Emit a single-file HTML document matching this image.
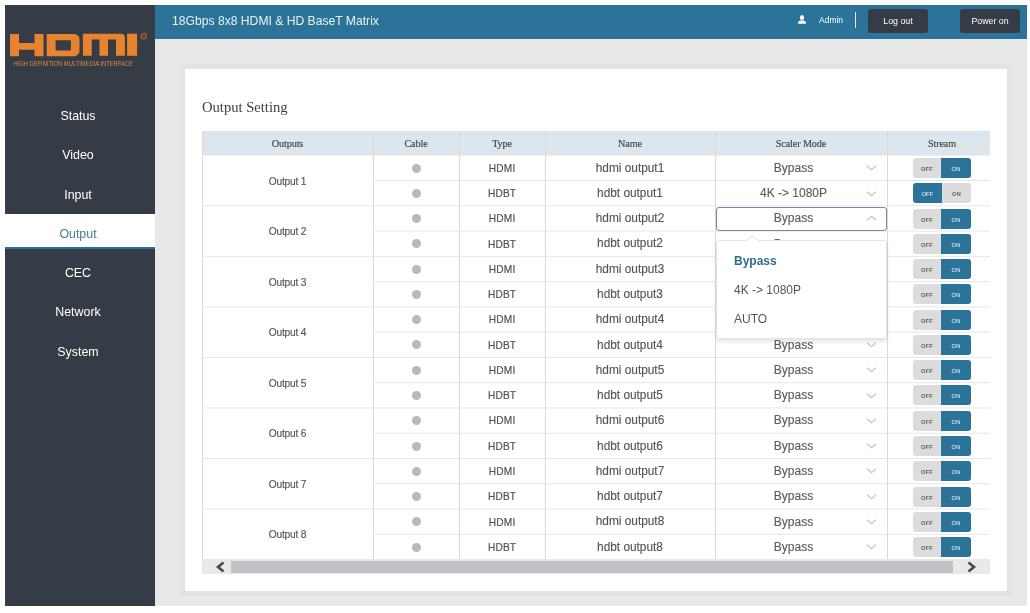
<!DOCTYPE html>
<html><head><meta charset="utf-8">
<style>
*{box-sizing:border-box;margin:0;padding:0}
html,body{width:1030px;height:613px;background:#fff;overflow:hidden;font-family:"Liberation Sans",sans-serif}
#wrap{position:absolute;left:0;top:0;width:1030px;height:613px;will-change:transform}
.a{position:absolute}
#side{left:5px;top:5px;width:150px;height:601px;background:#363c45}
#top{left:155px;top:5px;width:872px;height:34px;background:#2b7398}
#main{left:155px;top:39px;width:872px;height:567px;background:#e8e8e8}
#card{left:180px;top:64px;width:832px;height:532px;border:5px solid #e2e2e2;border-radius:4px;background:#fff}
.nav{left:3px;width:150px;text-align:center;color:#fff;font-size:12.4px;height:20px;line-height:20px}
.t{white-space:nowrap;text-align:center}
.hd{font-family:"Liberation Serif",serif;font-size:10.2px;letter-spacing:-0.12px;color:#444;height:24px;line-height:24px;-webkit-text-stroke:0.2px #555}
.c{color:#535353;height:25px;line-height:25px;-webkit-text-stroke:0.12px #535353}
.dot{width:9px;height:9px;border-radius:50%;background:#b9b9b9}
.tg{width:58px;height:20px;border-radius:3px;overflow:hidden;font-size:5.6px;font-weight:bold;letter-spacing:0.3px}
.tg div{position:absolute;top:0;height:20px;line-height:22px;text-align:center}
.off{background:#dcdcdc;color:#5e5e5e}
.on{background:#2b7398;color:#fff;font-weight:normal}
</style></head><body><div id="wrap">
<div id="side" class="a"></div>
<div id="top" class="a"></div>
<div id="main" class="a"></div>
<div id="card" class="a"></div>
<svg class="a" style="left:0;top:0" width="155" height="75" viewBox="0 0 155 75">
<g fill="#e8832f">
<path d="M10 34h9v8.9h15.5V34h9v22.2h-9v-6.5H19v6.5h-9z"/>
<path d="M46.7 34h27.3a5.5 5.5 0 0 1 5.5 5.5v11.2a5.5 5.5 0 0 1-5.5 5.5H46.7V40.2h8.9v10.2h15.3V40.2H46.7z"/>
<path d="M82.9 33.7h38a4 4 0 0 1 4 4v18.1h-8.9V39.6h-8v16.2h-8.5V39.6h-7.8v16.2h-8.8z"/>
<rect x="127.1" y="33.7" width="10" height="22.1"/>
</g>
<circle cx="143.7" cy="36.3" r="2.6" fill="none" stroke="#a9642b" stroke-width="1.2"/><circle cx="143.7" cy="36.3" r="0.9" fill="#8a5a33"/>
<text x="13.4" y="66" font-family="Liberation Sans" font-size="6.6" fill="#dd8a40" textLength="119.5" lengthAdjust="spacingAndGlyphs">HIGH DEFINITION MULTIMEDIA INTERFACE</text>
</svg>
<div class="a nav" style="top:106.0px">Status</div>
<div class="a nav" style="top:145.3px">Video</div>
<div class="a nav" style="top:184.6px">Input</div>
<div class="a" style="left:5px;top:214px;width:150px;height:35px;background:#fff;border-bottom:2px solid #2b7398"></div>
<div class="a nav" style="top:223.8px;color:#4a7a95">Output</div>
<div class="a nav" style="top:263.1px">CEC</div>
<div class="a nav" style="top:302.3px">Network</div>
<div class="a nav" style="top:341.6px">System</div>
<div class="a t" style="left:172px;top:10.7px;font-size:12.15px;line-height:20px;color:#e9f0f4">18Gbps 8x8 HDMI &amp; HD BaseT Matrix</div>
<svg class="a" style="left:797px;top:14px" width="10" height="11" viewBox="0 0 10 11"><ellipse cx="5" cy="3.6" rx="2.1" ry="2.5" fill="#fff"/><path d="M1 9.8 C1 6.8 2.6 6.4 5 6.4 S9 6.8 9 9.8Z" fill="#fff"/></svg>
<div class="a t" style="left:819px;top:12px;font-size:8.5px;line-height:16px;color:#fff">Admin</div>
<div class="a" style="left:855px;top:12px;width:1px;height:16px;background:#dfe9ef"></div>
<div class="a t" style="left:868px;top:9px;width:60px;height:24px;line-height:24px;border-radius:3px;background:#363c45;color:#fff;font-size:8.8px">Log out</div>
<div class="a t" style="left:960px;top:9px;width:60px;height:24px;line-height:24px;border-radius:3px;background:#363c45;color:#fff;font-size:8.8px">Power on</div>
<div class="a" style="left:202px;top:97px;font-family:'Liberation Serif',serif;font-size:14.6px;line-height:20px;color:#3a3f48">Output Setting</div>
<div class="a" style="left:202px;top:131px;width:788px;height:24px;background:#dce6ec"></div>
<div class="a t hd" style="left:202px;top:131.9px;width:171px">Outputs</div>
<div class="a t hd" style="left:373px;top:131.9px;width:86px">Cable</div>
<div class="a t hd" style="left:459px;top:131.9px;width:86px">Type</div>
<div class="a t hd" style="left:545px;top:131.9px;width:170px">Name</div>
<div class="a t hd" style="left:715px;top:131.9px;width:172px">Scaler Mode</div>
<div class="a t hd" style="left:887px;top:131.9px;width:110px">Stream</div>
<svg class="a" style="left:0;top:0" width="1030" height="613" viewBox="0 0 1030 613"><rect x="202" y="131" width="1" height="428.07" fill="#d9d9d9"/><rect x="373" y="131" width="1" height="428.07" fill="#d9d9d9"/><rect x="459" y="131" width="1" height="428.07" fill="#d9d9d9"/><rect x="545" y="131" width="1" height="428.07" fill="#d9d9d9"/><rect x="715" y="131" width="1" height="428.07" fill="#d9d9d9"/><rect x="887" y="131" width="1" height="428.07" fill="#d9d9d9"/><rect x="202" y="155.00" width="788" height="1" fill="#e8eef2"/><rect x="373" y="180.02" width="617" height="1" fill="#e6e6e6"/><rect x="202" y="205.29" width="788" height="1" fill="#e6e6e6"/><rect x="373" y="230.56" width="617" height="1" fill="#e6e6e6"/><rect x="202" y="255.83" width="788" height="1" fill="#e6e6e6"/><rect x="373" y="281.10" width="617" height="1" fill="#e6e6e6"/><rect x="202" y="306.37" width="788" height="1" fill="#e6e6e6"/><rect x="373" y="331.64" width="617" height="1" fill="#e6e6e6"/><rect x="202" y="356.91" width="788" height="1" fill="#e6e6e6"/><rect x="373" y="382.18" width="617" height="1" fill="#e6e6e6"/><rect x="202" y="407.45" width="788" height="1" fill="#e6e6e6"/><rect x="373" y="432.72" width="617" height="1" fill="#e6e6e6"/><rect x="202" y="457.99" width="788" height="1" fill="#e6e6e6"/><rect x="373" y="483.26" width="617" height="1" fill="#e6e6e6"/><rect x="202" y="508.53" width="788" height="1" fill="#e6e6e6"/><rect x="373" y="533.80" width="617" height="1" fill="#e6e6e6"/></svg>
<div class="a t c" style="left:202px;top:168.5px;width:171px;font-size:10.2px;letter-spacing:-0.2px">Output 1</div>
<div class="a dot" style="left:412px;top:163.5px"></div>
<div class="a t c" style="left:459px;top:155.7px;width:86px;font-size:10.1px;letter-spacing:0.2px;text-indent:0.2px;-webkit-text-stroke:0.2px #555">HDMI</div>
<div class="a t c" style="left:545px;top:155.6px;width:170px;font-size:11.85px">hdmi output1</div>
<div class="a t c" style="left:716px;top:155.7px;width:155px;font-size:12px;color:#5c5c5c">Bypass</div>
<svg class="a" style="left:866px;top:165.2px" width="11" height="6" viewBox="0 0 11 6"><path d="M1 0.8L5.5 4.7L10 0.8" fill="none" stroke="#c6c6c6" stroke-width="1.3"/></svg>
<div class="a tg" style="left:913px;top:158.0px"><div class="off" style="left:0;width:28px">OFF</div><div class="on" style="left:28px;width:30px">ON</div></div>
<div class="a dot" style="left:412px;top:188.8px"></div>
<div class="a t c" style="left:459px;top:181.0px;width:86px;font-size:10.1px;letter-spacing:0.2px;text-indent:0.2px;-webkit-text-stroke:0.2px #555">HDBT</div>
<div class="a t c" style="left:545px;top:180.9px;width:170px;font-size:11.85px">hdbt output1</div>
<div class="a t c" style="left:716px;top:181.0px;width:155px;font-size:12px;color:#5c5c5c">4K -&gt; 1080P</div>
<svg class="a" style="left:866px;top:190.5px" width="11" height="6" viewBox="0 0 11 6"><path d="M1 0.8L5.5 4.7L10 0.8" fill="none" stroke="#c6c6c6" stroke-width="1.3"/></svg>
<div class="a tg" style="left:913px;top:183.3px"><div class="on" style="left:0;width:29px">OFF</div><div class="off" style="left:29px;width:29px">ON</div></div>
<div class="a t c" style="left:202px;top:219.1px;width:171px;font-size:10.2px;letter-spacing:-0.2px">Output 2</div>
<div class="a dot" style="left:412px;top:214.0px"></div>
<div class="a t c" style="left:459px;top:206.2px;width:86px;font-size:10.1px;letter-spacing:0.2px;text-indent:0.2px;-webkit-text-stroke:0.2px #555">HDMI</div>
<div class="a t c" style="left:545px;top:206.1px;width:170px;font-size:11.85px">hdmi output2</div>
<div class="a t c" style="left:716px;top:206.2px;width:155px;font-size:12px;color:#5c5c5c">Bypass</div>
<div class="a" style="left:716px;top:207px;width:171px;height:24px;border:1.3px solid #6b8cab;border-radius:3px"></div>
<svg class="a" style="left:866px;top:215.0px" width="11" height="6" viewBox="0 0 11 6"><path d="M1 5.2L5.5 1.3L10 5.2" fill="none" stroke="#c6c6c6" stroke-width="1.3"/></svg>
<div class="a tg" style="left:913px;top:208.5px"><div class="off" style="left:0;width:28px">OFF</div><div class="on" style="left:28px;width:30px">ON</div></div>
<div class="a dot" style="left:412px;top:239.3px"></div>
<div class="a t c" style="left:459px;top:231.5px;width:86px;font-size:10.1px;letter-spacing:0.2px;text-indent:0.2px;-webkit-text-stroke:0.2px #555">HDBT</div>
<div class="a t c" style="left:545px;top:231.4px;width:170px;font-size:11.85px">hdbt output2</div>
<div class="a t c" style="left:716px;top:231.5px;width:155px;font-size:12px;color:#5c5c5c">Bypass</div>
<svg class="a" style="left:866px;top:241.0px" width="11" height="6" viewBox="0 0 11 6"><path d="M1 0.8L5.5 4.7L10 0.8" fill="none" stroke="#c6c6c6" stroke-width="1.3"/></svg>
<div class="a tg" style="left:913px;top:233.8px"><div class="off" style="left:0;width:28px">OFF</div><div class="on" style="left:28px;width:30px">ON</div></div>
<div class="a t c" style="left:202px;top:269.6px;width:171px;font-size:10.2px;letter-spacing:-0.2px">Output 3</div>
<div class="a dot" style="left:412px;top:264.6px"></div>
<div class="a t c" style="left:459px;top:256.8px;width:86px;font-size:10.1px;letter-spacing:0.2px;text-indent:0.2px;-webkit-text-stroke:0.2px #555">HDMI</div>
<div class="a t c" style="left:545px;top:256.7px;width:170px;font-size:11.85px">hdmi output3</div>
<div class="a t c" style="left:716px;top:256.8px;width:155px;font-size:12px;color:#5c5c5c">Bypass</div>
<svg class="a" style="left:866px;top:266.3px" width="11" height="6" viewBox="0 0 11 6"><path d="M1 0.8L5.5 4.7L10 0.8" fill="none" stroke="#c6c6c6" stroke-width="1.3"/></svg>
<div class="a tg" style="left:913px;top:259.1px"><div class="off" style="left:0;width:28px">OFF</div><div class="on" style="left:28px;width:30px">ON</div></div>
<div class="a dot" style="left:412px;top:289.8px"></div>
<div class="a t c" style="left:459px;top:282.0px;width:86px;font-size:10.1px;letter-spacing:0.2px;text-indent:0.2px;-webkit-text-stroke:0.2px #555">HDBT</div>
<div class="a t c" style="left:545px;top:281.9px;width:170px;font-size:11.85px">hdbt output3</div>
<div class="a t c" style="left:716px;top:282.0px;width:155px;font-size:12px;color:#5c5c5c">Bypass</div>
<svg class="a" style="left:866px;top:291.5px" width="11" height="6" viewBox="0 0 11 6"><path d="M1 0.8L5.5 4.7L10 0.8" fill="none" stroke="#c6c6c6" stroke-width="1.3"/></svg>
<div class="a tg" style="left:913px;top:284.3px"><div class="off" style="left:0;width:28px">OFF</div><div class="on" style="left:28px;width:30px">ON</div></div>
<div class="a t c" style="left:202px;top:320.1px;width:171px;font-size:10.2px;letter-spacing:-0.2px">Output 4</div>
<div class="a dot" style="left:412px;top:315.1px"></div>
<div class="a t c" style="left:459px;top:307.3px;width:86px;font-size:10.1px;letter-spacing:0.2px;text-indent:0.2px;-webkit-text-stroke:0.2px #555">HDMI</div>
<div class="a t c" style="left:545px;top:307.2px;width:170px;font-size:11.85px">hdmi output4</div>
<div class="a t c" style="left:716px;top:307.3px;width:155px;font-size:12px;color:#5c5c5c">Bypass</div>
<svg class="a" style="left:866px;top:316.8px" width="11" height="6" viewBox="0 0 11 6"><path d="M1 0.8L5.5 4.7L10 0.8" fill="none" stroke="#c6c6c6" stroke-width="1.3"/></svg>
<div class="a tg" style="left:913px;top:309.6px"><div class="off" style="left:0;width:28px">OFF</div><div class="on" style="left:28px;width:30px">ON</div></div>
<div class="a dot" style="left:412px;top:340.4px"></div>
<div class="a t c" style="left:459px;top:332.6px;width:86px;font-size:10.1px;letter-spacing:0.2px;text-indent:0.2px;-webkit-text-stroke:0.2px #555">HDBT</div>
<div class="a t c" style="left:545px;top:332.5px;width:170px;font-size:11.85px">hdbt output4</div>
<div class="a t c" style="left:716px;top:332.6px;width:155px;font-size:12px;color:#5c5c5c">Bypass</div>
<svg class="a" style="left:866px;top:342.1px" width="11" height="6" viewBox="0 0 11 6"><path d="M1 0.8L5.5 4.7L10 0.8" fill="none" stroke="#c6c6c6" stroke-width="1.3"/></svg>
<div class="a tg" style="left:913px;top:334.9px"><div class="off" style="left:0;width:28px">OFF</div><div class="on" style="left:28px;width:30px">ON</div></div>
<div class="a t c" style="left:202px;top:370.7px;width:171px;font-size:10.2px;letter-spacing:-0.2px">Output 5</div>
<div class="a dot" style="left:412px;top:365.6px"></div>
<div class="a t c" style="left:459px;top:357.8px;width:86px;font-size:10.1px;letter-spacing:0.2px;text-indent:0.2px;-webkit-text-stroke:0.2px #555">HDMI</div>
<div class="a t c" style="left:545px;top:357.7px;width:170px;font-size:11.85px">hdmi output5</div>
<div class="a t c" style="left:716px;top:357.8px;width:155px;font-size:12px;color:#5c5c5c">Bypass</div>
<svg class="a" style="left:866px;top:367.3px" width="11" height="6" viewBox="0 0 11 6"><path d="M1 0.8L5.5 4.7L10 0.8" fill="none" stroke="#c6c6c6" stroke-width="1.3"/></svg>
<div class="a tg" style="left:913px;top:360.1px"><div class="off" style="left:0;width:28px">OFF</div><div class="on" style="left:28px;width:30px">ON</div></div>
<div class="a dot" style="left:412px;top:390.9px"></div>
<div class="a t c" style="left:459px;top:383.1px;width:86px;font-size:10.1px;letter-spacing:0.2px;text-indent:0.2px;-webkit-text-stroke:0.2px #555">HDBT</div>
<div class="a t c" style="left:545px;top:383.0px;width:170px;font-size:11.85px">hdbt output5</div>
<div class="a t c" style="left:716px;top:383.1px;width:155px;font-size:12px;color:#5c5c5c">Bypass</div>
<svg class="a" style="left:866px;top:392.6px" width="11" height="6" viewBox="0 0 11 6"><path d="M1 0.8L5.5 4.7L10 0.8" fill="none" stroke="#c6c6c6" stroke-width="1.3"/></svg>
<div class="a tg" style="left:913px;top:385.4px"><div class="off" style="left:0;width:28px">OFF</div><div class="on" style="left:28px;width:30px">ON</div></div>
<div class="a t c" style="left:202px;top:421.2px;width:171px;font-size:10.2px;letter-spacing:-0.2px">Output 6</div>
<div class="a dot" style="left:412px;top:416.2px"></div>
<div class="a t c" style="left:459px;top:408.4px;width:86px;font-size:10.1px;letter-spacing:0.2px;text-indent:0.2px;-webkit-text-stroke:0.2px #555">HDMI</div>
<div class="a t c" style="left:545px;top:408.3px;width:170px;font-size:11.85px">hdmi output6</div>
<div class="a t c" style="left:716px;top:408.4px;width:155px;font-size:12px;color:#5c5c5c">Bypass</div>
<svg class="a" style="left:866px;top:417.9px" width="11" height="6" viewBox="0 0 11 6"><path d="M1 0.8L5.5 4.7L10 0.8" fill="none" stroke="#c6c6c6" stroke-width="1.3"/></svg>
<div class="a tg" style="left:913px;top:410.7px"><div class="off" style="left:0;width:28px">OFF</div><div class="on" style="left:28px;width:30px">ON</div></div>
<div class="a dot" style="left:412px;top:441.5px"></div>
<div class="a t c" style="left:459px;top:433.7px;width:86px;font-size:10.1px;letter-spacing:0.2px;text-indent:0.2px;-webkit-text-stroke:0.2px #555">HDBT</div>
<div class="a t c" style="left:545px;top:433.6px;width:170px;font-size:11.85px">hdbt output6</div>
<div class="a t c" style="left:716px;top:433.7px;width:155px;font-size:12px;color:#5c5c5c">Bypass</div>
<svg class="a" style="left:866px;top:443.2px" width="11" height="6" viewBox="0 0 11 6"><path d="M1 0.8L5.5 4.7L10 0.8" fill="none" stroke="#c6c6c6" stroke-width="1.3"/></svg>
<div class="a tg" style="left:913px;top:436.0px"><div class="off" style="left:0;width:28px">OFF</div><div class="on" style="left:28px;width:30px">ON</div></div>
<div class="a t c" style="left:202px;top:471.8px;width:171px;font-size:10.2px;letter-spacing:-0.2px">Output 7</div>
<div class="a dot" style="left:412px;top:466.7px"></div>
<div class="a t c" style="left:459px;top:458.9px;width:86px;font-size:10.1px;letter-spacing:0.2px;text-indent:0.2px;-webkit-text-stroke:0.2px #555">HDMI</div>
<div class="a t c" style="left:545px;top:458.8px;width:170px;font-size:11.85px">hdmi output7</div>
<div class="a t c" style="left:716px;top:458.9px;width:155px;font-size:12px;color:#5c5c5c">Bypass</div>
<svg class="a" style="left:866px;top:468.4px" width="11" height="6" viewBox="0 0 11 6"><path d="M1 0.8L5.5 4.7L10 0.8" fill="none" stroke="#c6c6c6" stroke-width="1.3"/></svg>
<div class="a tg" style="left:913px;top:461.2px"><div class="off" style="left:0;width:28px">OFF</div><div class="on" style="left:28px;width:30px">ON</div></div>
<div class="a dot" style="left:412px;top:492.0px"></div>
<div class="a t c" style="left:459px;top:484.2px;width:86px;font-size:10.1px;letter-spacing:0.2px;text-indent:0.2px;-webkit-text-stroke:0.2px #555">HDBT</div>
<div class="a t c" style="left:545px;top:484.1px;width:170px;font-size:11.85px">hdbt output7</div>
<div class="a t c" style="left:716px;top:484.2px;width:155px;font-size:12px;color:#5c5c5c">Bypass</div>
<svg class="a" style="left:866px;top:493.7px" width="11" height="6" viewBox="0 0 11 6"><path d="M1 0.8L5.5 4.7L10 0.8" fill="none" stroke="#c6c6c6" stroke-width="1.3"/></svg>
<div class="a tg" style="left:913px;top:486.5px"><div class="off" style="left:0;width:28px">OFF</div><div class="on" style="left:28px;width:30px">ON</div></div>
<div class="a t c" style="left:202px;top:522.3px;width:171px;font-size:10.2px;letter-spacing:-0.2px">Output 8</div>
<div class="a dot" style="left:412px;top:517.3px"></div>
<div class="a t c" style="left:459px;top:509.5px;width:86px;font-size:10.1px;letter-spacing:0.2px;text-indent:0.2px;-webkit-text-stroke:0.2px #555">HDMI</div>
<div class="a t c" style="left:545px;top:509.4px;width:170px;font-size:11.85px">hdmi output8</div>
<div class="a t c" style="left:716px;top:509.5px;width:155px;font-size:12px;color:#5c5c5c">Bypass</div>
<svg class="a" style="left:866px;top:519.0px" width="11" height="6" viewBox="0 0 11 6"><path d="M1 0.8L5.5 4.7L10 0.8" fill="none" stroke="#c6c6c6" stroke-width="1.3"/></svg>
<div class="a tg" style="left:913px;top:511.8px"><div class="off" style="left:0;width:28px">OFF</div><div class="on" style="left:28px;width:30px">ON</div></div>
<div class="a dot" style="left:412px;top:542.5px"></div>
<div class="a t c" style="left:459px;top:534.7px;width:86px;font-size:10.1px;letter-spacing:0.2px;text-indent:0.2px;-webkit-text-stroke:0.2px #555">HDBT</div>
<div class="a t c" style="left:545px;top:534.6px;width:170px;font-size:11.85px">hdbt output8</div>
<div class="a t c" style="left:716px;top:534.7px;width:155px;font-size:12px;color:#5c5c5c">Bypass</div>
<svg class="a" style="left:866px;top:544.2px" width="11" height="6" viewBox="0 0 11 6"><path d="M1 0.8L5.5 4.7L10 0.8" fill="none" stroke="#c6c6c6" stroke-width="1.3"/></svg>
<div class="a tg" style="left:913px;top:537.0px"><div class="off" style="left:0;width:28px">OFF</div><div class="on" style="left:28px;width:30px">ON</div></div>
<div class="a" style="left:202px;top:559px;width:788px;height:15px;background:#e9e9e9"></div>
<div class="a" style="left:231px;top:561px;width:722px;height:12px;background:#c2c2c6"></div>
<svg class="a" style="left:215px;top:561px" width="11" height="12" viewBox="0 0 11 12"><path d="M8.5 1.5L3 6L8.5 10.5" fill="none" stroke="#4a4a4a" stroke-width="2.6"/></svg>
<svg class="a" style="left:966px;top:561px" width="11" height="12" viewBox="0 0 11 12"><path d="M2.5 1.5L8 6L2.5 10.5" fill="none" stroke="#4a4a4a" stroke-width="2.6"/></svg>
<div class="a" style="left:716px;top:240px;width:171px;height:99px;background:#fff;border:1px solid #e3e3e3;border-radius:3px;box-shadow:0 3px 4px rgba(0,0,0,0.10)"></div>
<svg class="a" style="left:745px;top:235px" width="16" height="7" viewBox="0 0 16 7"><path d="M0 6.5L7.5 1L15 6.5" fill="#fff" stroke="#e3e3e3" stroke-width="1"/></svg>
<div class="a" style="left:734px;top:251px;font-size:12px;line-height:20px;font-weight:bold;color:#2f6e8e">Bypass</div>
<div class="a" style="left:734px;top:280px;font-size:12px;line-height:20px;color:#555">4K -&gt; 1080P</div>
<div class="a" style="left:734px;top:309px;font-size:12px;line-height:20px;color:#555">AUTO</div>
</div></body></html>
